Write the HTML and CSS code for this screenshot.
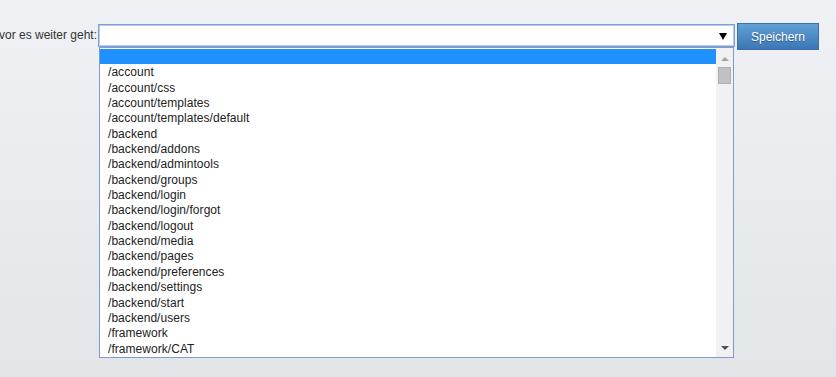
FILE: index.html
```html
<!DOCTYPE html>
<html lang="de">
<head>
<meta charset="utf-8">
<title>Weiterleitung</title>
<link rel="stylesheet" href="styles.css">
</head>
<body>
<form class="row">
  <div class="label">vor es weiter geht:</div>
  <div class="select">
    <span class="select-value"></span>
    <span class="select-arrow"></span>
  </div>
  <button type="button" class="btn">Speichern</button>
</form>
<div class="popup">
  <ul class="options">
    <li class="opt sel">&nbsp;</li>
    <li class="opt">/account</li>
    <li class="opt">/account/css</li>
    <li class="opt">/account/templates</li>
    <li class="opt">/account/templates/default</li>
    <li class="opt">/backend</li>
    <li class="opt">/backend/addons</li>
    <li class="opt">/backend/admintools</li>
    <li class="opt">/backend/groups</li>
    <li class="opt">/backend/login</li>
    <li class="opt">/backend/login/forgot</li>
    <li class="opt">/backend/logout</li>
    <li class="opt">/backend/media</li>
    <li class="opt">/backend/pages</li>
    <li class="opt">/backend/preferences</li>
    <li class="opt">/backend/settings</li>
    <li class="opt">/backend/start</li>
    <li class="opt">/backend/users</li>
    <li class="opt">/framework</li>
    <li class="opt">/framework/CAT</li>
  </ul>
  <div class="scrollbar">
    <span class="sb-up"></span>
    <span class="sb-thumb"></span>
    <span class="sb-fill"></span>
    <span class="sb-down"></span>
  </div>
</div>
</body>
</html>
```
FILE: styles.css
```css
html, body {
  margin: 0;
  height: 100%;
}
body {
  background: linear-gradient(#eff1f4, #e3e6e9);
  font-family: "Liberation Sans", Arial, sans-serif;
  font-size: 12px;
  color: #333;
  overflow: hidden;
  position: relative;
}
.row {
  display: flex;
  align-items: flex-start;
  padding-top: 23px;
  margin: 0;
}
.label {
  width: 98px;
  flex: none;
  display: flex;
  justify-content: flex-end;
  white-space: nowrap;
  line-height: 22px;
  margin-top: 1px;
  padding-right: 1px;
  box-sizing: border-box;
  color: #333;
}
.select {
  width: 637px;
  height: 23px;
  flex: none;
  margin-top: 1px;
  box-sizing: border-box;
  border: 1px solid #7d9fd6;
  box-shadow: inset 0 0 0 1px #b8cbec;
  background: #fff;
  display: flex;
  align-items: center;
  justify-content: flex-end;
  padding-right: 7px;
}
.select-arrow {
  width: 0;
  height: 0;
  border-left: 4px solid transparent;
  border-right: 4px solid transparent;
  border-top: 7px solid #000;
  margin-top: 1px;
}
.btn {
  margin-left: 2px;
  width: 82px;
  height: 27px;
  flex: none;
  box-sizing: border-box;
  border: 1px solid #3c70a8;
  background: linear-gradient(#61a0d9, #3b77b4);
  color: #fff;
  font-family: "Liberation Sans", Arial, sans-serif;
  font-size: 12px;
  text-shadow: 0 1px 1px rgba(0,0,0,0.35);
  padding: 0;
  cursor: pointer;
}
.popup {
  position: absolute;
  left: 99px;
  top: 47px;
  width: 635px;
  height: 311px;
  box-sizing: border-box;
  border: 1px solid #7d9bd0;
  background: #fff;
  display: flex;
}
.options {
  list-style: none;
  margin: 0;
  padding: 1px 0 0;
  flex: 1;
  overflow: hidden;
}
.opt {
  height: 15.35px;
  line-height: 16px;
  padding-left: 8px;
  color: #222;
  white-space: nowrap;
  letter-spacing: 0.05px;
}
.opt.sel {
  background: #1e90ff;
}
.scrollbar {
  width: 17px;
  flex: none;
  background: #f1f1f1;
  display: flex;
  flex-direction: column;
  align-items: center;
}
.sb-up {
  margin-top: 9px;
  width: 0;
  height: 0;
  border-left: 4px solid transparent;
  border-right: 4px solid transparent;
  border-bottom: 4px solid #a3a3a3;
}
.sb-thumb {
  margin-top: 6px;
  width: 13px;
  height: 17px;
  background: #c1c1c1;
  box-sizing: border-box;
  border: 1px solid #b0b0b0;
}
.sb-fill {
  flex: 1;
}
.sb-down {
  margin-bottom: 7px;
  width: 0;
  height: 0;
  border-left: 4px solid transparent;
  border-right: 4px solid transparent;
  border-top: 4px solid #505050;
}
```
